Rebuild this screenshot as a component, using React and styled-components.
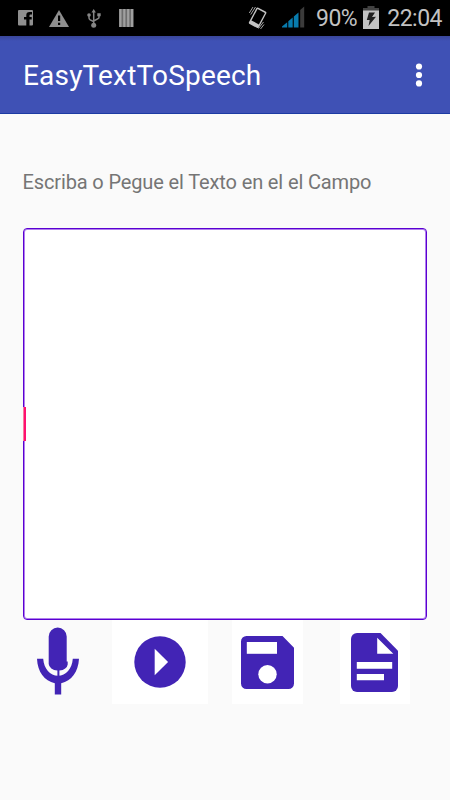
// ===== Logic =====
import styled, { createGlobalStyle } from "styled-components";

// === Status bar icons ===
const FacebookIcon = () => (
  <svg width="15" height="16" viewBox="0 0 15 16">
    <path
      fill="#8f8f8f"
      d="M1 0H14a1 1 0 0 1 1 1V14.500a1 1 0 0 1-1 1H11.500V9.500H13.700V7H11.500V5.400q0-1 1-1H14V2H11.500Q8.300 2 8.300 5V7H6V9.500H8.300V15.500H1a1 1 0 0 1-1-1V1a1 1 0 0 1 1-1z"
    />
  </svg>
);

const WarningIcon = () => (
  <svg width="20" height="17" viewBox="0 0 20 17">
    <path fill="#8f8f8f" d="M10 0L20 17H0z" />
    <path fill="#000" d="M9 5.500h2.200v5.500H9zM9 12.700h2.200v2.200H9z" />
  </svg>
);

const UsbIcon = () => (
  <svg width="14" height="19" viewBox="0 0 14 19">
    <g fill="none" stroke="#858585" strokeWidth="1.500">
      <path d="M6.700 2v14M2 6.500v2.500q0 1 1.200 1.800L6.700 12.700M12 6v2.200q0 1-1 1.500L6.700 12" />
    </g>
    <g fill="#858585">
      <path d="M6.700 0L8.900 3.500H4.500zM10.300 4.200h3.400v3h-3.400z" />
      <circle cx="2" cy="6" r="1.800" />
      <circle cx="6.700" cy="16.300" r="2.500" />
    </g>
  </svg>
);

const BarsIcon = () => (
  <svg width="15" height="18" viewBox="0 0 15 18">
    <path fill="#6d6d6d" d="M0 0h14.500v18H0z" />
    <path fill="#a0a0a0" d="M.300 0h2.200v18H.300zM4.200 0h2.200v18H4.200zM8.100 0h2.200v18H8.100zM12 0h2.200v18H12z" />
  </svg>
);

const VibrateIcon = () => (
  <svg width="21" height="24" viewBox="0 0 21 24">
    <g transform="rotate(28 10.500 12)">
      <rect x="4.900" y="2.500" width="11.200" height="18.500" rx="1.500" fill="#c4c4c4" />
      <rect x="6.300" y="4" width="8.400" height="13" fill="#000" />
    </g>
    <g stroke="#a5a5a5" strokeWidth="1" fill="none">
      <path d="M3.700 8.500L8.500 1M2.300 7L6 1M11.500 22.500L16.500 16M13.500 23L17 18.500" />
    </g>
  </svg>
);

const SignalIcon = () => (
  <svg width="23" height="22" viewBox="0 0 23 22">
    <path fill="#087bad" d="M0 21.500V20.500L5.200 16.200V21.500zM6.300 21.500V15.300L10.700 11.600V21.500zM11.800 21.500V10.600L16.500 6.500V21.500z" />
    <path fill="#3b3b3b" d="M18.200 4L22.200 .500V21.500H18.200z" />
  </svg>
);

const BatteryIcon = () => (
  <svg width="16" height="23" viewBox="0 0 16 23">
    <path fill="#424242" d="M4.500 0h7v2H16v4H0V2h4.500z" />
    <path fill="#c2c2c2" d="M0 4.500h16V23H0z" />
    <path fill="#202020" d="M6 6.500h6L9 11l4-.300L5.500 20l1.200-6H3.800z" />
  </svg>
);

const MoreIcon = () => (
  <svg width="8" height="24" viewBox="0 0 8 24">
    <g fill="#fff">
      <circle cx="4" cy="3.500" r="3.100" />
      <circle cx="4" cy="12" r="3.100" />
      <circle cx="4" cy="20.400" r="3.100" />
    </g>
  </svg>
);

// === Action icons ===
const MicIcon = () => (
  <svg width="42" height="68" viewBox="0 0 42 68">
    <path d="M11.700 9.500a9 9 0 0 1 18 0V34.500H30.700V37.500a10.100 7 0 0 1-8.300 6.100V49h-2V43.600a10.100 7 0 0 1-8.700-6.600z" />
    <path d="M0 31.800H6.200C7 42 13 48.800 21 48.800S35 42 35.800 31.800H42C41.300 45 34.500 54 24.200 56.300V67.500H17.800V56.300C7.500 54 .500 45 0 31.800z" />
  </svg>
);

const PlayIcon = () => (
  <svg width="52" height="52" viewBox="0 0 52 52">
    <circle cx="26" cy="26" r="25.700" />
    <path fill="#fff" d="M20.700 12.800V39.300L34.100 26z" />
  </svg>
);

const SaveIcon = () => (
  <svg width="53" height="53" viewBox="0 0 53 53">
    <path d="M5.500 0H41.500L53 11.700V47.500a5.500 5.500 0 0 1-5.500 5.500H5.500A5.500 5.500 0 0 1 0 47.500V5.500A5.500 5.500 0 0 1 5.500 0z" />
    <path fill="#fff" d="M5.800 6H36V17.800H5.800z" />
    <circle fill="#fff" cx="26.500" cy="38.300" r="9.200" />
  </svg>
);

const DocumentIcon = () => (
  <svg width="47" height="59" viewBox="0 0 47 59">
    <path d="M6 0H29.500L47 17.800V53a6 6 0 0 1-6 6H6a6 6 0 0 1-6-6V6a6 6 0 0 1 6-6z" />
    <path fill="#fff" d="M26.200 4.700L42.300 20.700H26.200zM5.800 29H41.200V35.700H5.800zM5.800 41H33V47.300H5.800z" />
  </svg>
);

export default function App() {
  return (
    <Screen>
      <GlobalStyle />

      {/* Status Bar */}
      <StatusBar>
        <Notifications>
          <FacebookIcon />
          <WarningIcon />
          <UsbIcon />
          <BarsIcon />
        </Notifications>
        <SystemStatus>
          <VibrateIcon />
          <SignalIcon />
          <StatusText $left={11}>90%</StatusText>
          <BatteryIcon />
          <StatusText $left={8}>22:04</StatusText>
        </SystemStatus>
      </StatusBar>

      {/* App Bar */}
      <AppBar>
        <Title>EasyTextToSpeech</Title>
        <MenuButton aria-label="Menu">
          <MoreIcon />
        </MenuButton>
      </AppBar>

      {/* Text Entry */}
      <Content>
        <Label>Escriba o Pegue el Texto en el el Campo</Label>
        <TextField>
          <Caret />
        </TextField>

        <Actions>
          <Action aria-label="Mic" $width={70} $plain>
            <MicIcon />
          </Action>
          <Action aria-label="Play" $width={96} $left={19}>
            <PlayIcon />
          </Action>
          <Action aria-label="Save" $width={71} $left={24}>
            <SaveIcon />
          </Action>
          <Action aria-label="Document" $width={70} $left={37}>
            <DocumentIcon />
          </Action>
        </Actions>
      </Content>
    </Screen>
  );
}

// ===== Styling =====
const GlobalStyle = createGlobalStyle`
  * {
    box-sizing: border-box;
  }

  body {
    margin: 0;
    background: #fafafa;
    font-family: Roboto, sans-serif;
  }

  svg {
    display: block;
    flex: none;
  }
`;

const Screen = styled.main`
  display: flex;
  flex-direction: column;
  width: 450px;
  height: 800px;
  background: #fafafa;
  overflow: hidden;
`;

const StatusBar = styled.header`
  display: flex;
  justify-content: space-between;
  height: 36px;
  padding: 0 8px 0 18px;
  background: #000;
`;

const Notifications = styled.div`
  display: grid;
  grid-template-columns: 31px 38px 32px 15px;
  align-items: center;
`;

const SystemStatus = styled.div`
  display: flex;
  align-items: center;

  svg:nth-of-type(2) {
    margin: 0 0 2px 14px;
  }

  svg:nth-of-type(3) {
    margin: 0 0 2px 6px;
  }
`;

const StatusText = styled.span`
  margin-left: ${({ $left }) => $left}px;
  padding-top: 2px;
  color: #c2c2c2;
  font-size: 23px;
  letter-spacing: -0.5px;
  line-height: 34px;
`;

const AppBar = styled.nav`
  display: flex;
  align-items: center;
  justify-content: space-between;
  height: 78px;
  padding: 0 27px 0 23px;
  border-bottom: 1px solid #1c3ba3;
  background: linear-gradient(#394699, #3f51b5 5px);
`;

const Title = styled.h1`
  margin: 2px 0 0;
  color: #fff;
  font-size: 28px;
  font-weight: 400;
  letter-spacing: 0.18px;
`;

const MenuButton = styled.button`
  padding: 0;
  border: 0;
  background: none;
`;

const Content = styled.section`
  padding: 55px 23px 0 22.500px;
`;

const Label = styled.p`
  margin: 0;
  color: #757575;
  font-size: 20px;
  letter-spacing: -0.13px;
  line-height: 26px;
`;

const TextField = styled.div`
  display: flex;
  align-items: center;
  height: 392px;
  margin-top: 33px;
  border: 1px solid #5a00d2;
  border-radius: 4px;
  background: #fff;
  box-shadow: inset 0 0 0 1px rgba(98, 0, 220, 0.5);
`;

const Caret = styled.span`
  width: 3px;
  height: 34px;
  margin-left: -1px;
  background: linear-gradient(90deg, #f67f9d 1px, #ff1070 1px);
`;

const Actions = styled.div`
  display: flex;
`;

const Action = styled.button`
  display: flex;
  align-items: center;
  justify-content: center;
  width: ${({ $width }) => $width}px;
  height: 84px;
  margin-left: ${({ $left }) => $left || 0}px;
  padding: 0;
  border: 0;
  background: ${({ $plain }) => ($plain ? "transparent" : "#fff")};
  fill: #4224b5;

  svg {
    margin-top: ${({ $plain }) => ($plain ? "-3px" : "0")};
  }
`;
